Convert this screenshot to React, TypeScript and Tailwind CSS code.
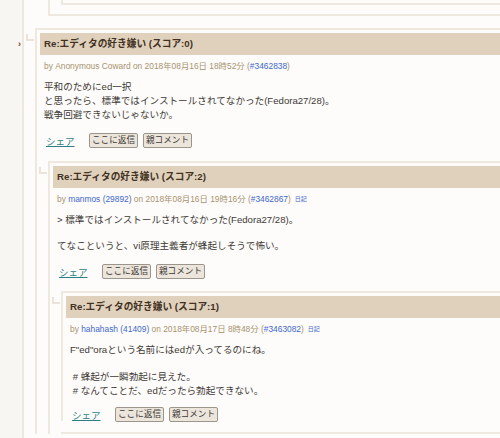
import type { ReactNode } from 'react';

type CommentProps = {
  score: number;
  author: ReactNode;
  date: string;
  cid: string;
  diary?: boolean;
  lines: ReactNode;
  marked?: boolean;
  children?: ReactNode;
};

function Comment({ score, author, date, cid, diary, lines, marked, children }: CommentProps) {
  return (
    <div className="relative border-l-2 border-t-2 border-[#efe8df] bg-[#fdfcfa] pl-[3px] pt-[3px]">
      {/* Thread connector */}
      <span className="absolute left-[-11px] top-[4px] h-[7px] w-[8px] border-b-2 border-l-2 border-[#ebe3d9]" />
      {marked && (
        <span className="absolute left-[-19px] top-[8px] text-[9px] font-bold leading-[12px] text-[#8a3a1c]">›</span>
      )}
      <h3 className="flex h-[22px] items-center bg-[#e0d1bd] pl-1 text-[9.7px] font-bold text-[#43321f]">
        Re:エディタの好き嫌い (スコア:{score})
      </h3>
      <p className="mt-[5px] flex h-[12px] items-center whitespace-nowrap pl-1 text-[8.4px] text-[#a8926f]">
        <span>by&nbsp;</span>
        {author}
        <span>&nbsp;on {date} (</span>
        <a className="text-[#3e67cc]">#{cid}</a>
        <span>)</span>
        {diary && <a className="ml-[4px] text-[6px] text-[#3e67cc]">日記</a>}
      </p>
      <div className="mt-[8px] whitespace-nowrap pl-1 text-[9.6px] leading-[14px] text-[#3d3a36]">{lines}</div>
      <div className="mt-[11px] flex h-[14px] items-center pl-[6px]">
        <a className="w-[43px] pt-[4px] text-[9.5px] text-[#2f7f86] underline">シェア</a>
        <button type="button" className="h-[15px] w-[49px] rounded-[2px] border border-[#9b958c] bg-[#ece5db] text-[8.6px] leading-none text-[#3d3a36]">
          ここに返信
        </button>
        <button type="button" className="ml-[5px] h-[15px] w-[49px] rounded-[2px] border border-[#9b958c] bg-[#ece5db] text-[8.6px] leading-none text-[#3d3a36]">
          親コメント
        </button>
      </div>
      {children}
    </div>
  );
}

export default function App() {
  return (
    <div
      className="h-[438px] w-[500px] overflow-hidden bg-[#f8f6f3]"
      style={{ fontFamily: '"Liberation Sans", "Noto Sans CJK JP", sans-serif' }}
    >
      <div className="ml-[22px] h-full border-l-2 border-[#efe8df] bg-[#fdfcfa] pl-[11px]">
        {/* Tail of the previous thread */}
        <div className="ml-[13px] h-[16px] border-b-2 border-l-2 border-[#efe8df] pl-[11px]">
          <div className="h-[5px] border-b-2 border-l-2 border-[#efe8df]" />
        </div>
        <div className="mt-[12px]">
          <Comment
            marked
            score={0}
            author={<span>Anonymous Coward</span>}
            date="2018年08月16日 18時52分"
            cid="3462838"
            lines={
              <>
                <div>平和のためにed一択</div>
                <div>と思ったら、標準ではインストールされてなかった(Fedora27/28)。</div>
                <div>戦争回避できないじゃないか。</div>
              </>
            }
          >
            <div className="ml-[8px] mt-[14px]">
              <Comment
                score={2}
                author={<a className="text-[#3e67cc]">manmos (29892)</a>}
                date="2018年08月16日 19時16分"
                cid="3462867"
                diary
                lines={
                  <>
                    <div>&gt; 標準ではインストールされてなかった(Fedora27/28)。</div>
                    <div className="mt-[12px]">てなこというと、vi原理主義者が蜂起しそうで怖い。</div>
                  </>
                }
              >
                <div className="ml-[8px] mt-[13px]">
                  <div className="border-b-2 border-[#efe8df] pb-[11px]">
                    <Comment
                      score={1}
                      author={<a className="text-[#3e67cc]">hahahash (41409)</a>}
                      date="2018年08月17日 8時48分"
                      cid="3463082"
                      diary
                      lines={
                        <>
                          <div>F"ed"oraという名前にはedが入ってるのにね。</div>
                          <div className="mt-[13px]">&nbsp;# 蜂起が一瞬勃起に見えた。</div>
                          <div className="-mb-[2px]">&nbsp;# なんてことだ、edだったら勃起できない。</div>
                        </>
                      }
                    />
                  </div>
                </div>
              </Comment>
            </div>
          </Comment>
        </div>
      </div>
    </div>
  );
}
